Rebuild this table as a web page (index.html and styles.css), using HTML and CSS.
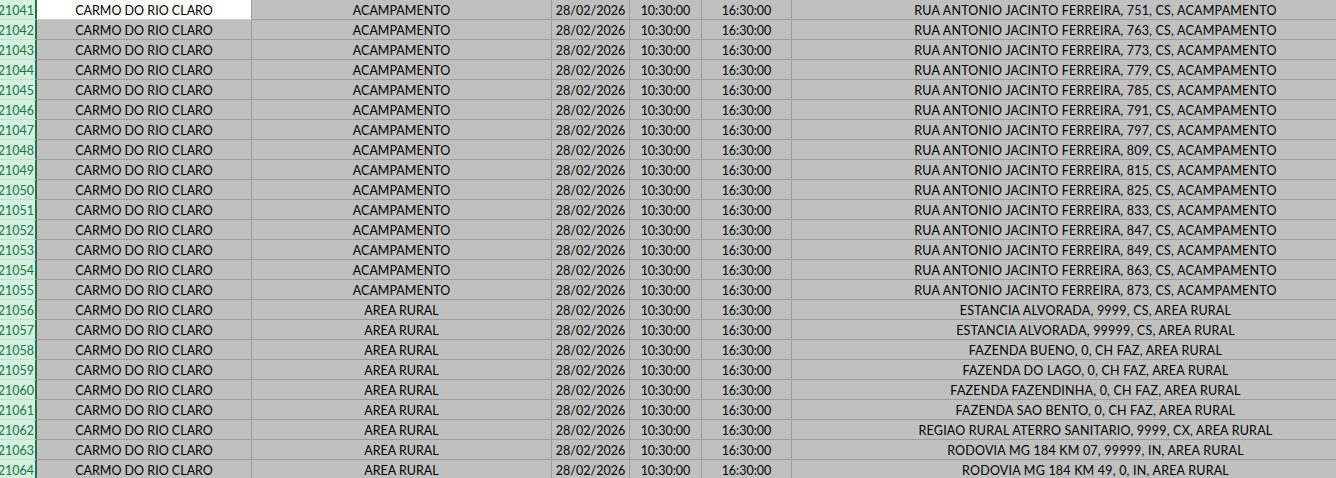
FILE: index.html
```html
<!DOCTYPE html>
<html lang="pt">
<head>
  <meta charset="UTF-8">
  <title>Planilha</title>
  <link rel="stylesheet" href="styles.css">
</head>
<body>
  <div class="sheet" id="sheet"></div>

  <script>
    const first = 21041;
    const rows = [
      ['ACAMPAMENTO', 'RUA ANTONIO JACINTO FERREIRA, 751, CS, ACAMPAMENTO'],
      ['ACAMPAMENTO', 'RUA ANTONIO JACINTO FERREIRA, 763, CS, ACAMPAMENTO'],
      ['ACAMPAMENTO', 'RUA ANTONIO JACINTO FERREIRA, 773, CS, ACAMPAMENTO'],
      ['ACAMPAMENTO', 'RUA ANTONIO JACINTO FERREIRA, 779, CS, ACAMPAMENTO'],
      ['ACAMPAMENTO', 'RUA ANTONIO JACINTO FERREIRA, 785, CS, ACAMPAMENTO'],
      ['ACAMPAMENTO', 'RUA ANTONIO JACINTO FERREIRA, 791, CS, ACAMPAMENTO'],
      ['ACAMPAMENTO', 'RUA ANTONIO JACINTO FERREIRA, 797, CS, ACAMPAMENTO'],
      ['ACAMPAMENTO', 'RUA ANTONIO JACINTO FERREIRA, 809, CS, ACAMPAMENTO'],
      ['ACAMPAMENTO', 'RUA ANTONIO JACINTO FERREIRA, 815, CS, ACAMPAMENTO'],
      ['ACAMPAMENTO', 'RUA ANTONIO JACINTO FERREIRA, 825, CS, ACAMPAMENTO'],
      ['ACAMPAMENTO', 'RUA ANTONIO JACINTO FERREIRA, 833, CS, ACAMPAMENTO'],
      ['ACAMPAMENTO', 'RUA ANTONIO JACINTO FERREIRA, 847, CS, ACAMPAMENTO'],
      ['ACAMPAMENTO', 'RUA ANTONIO JACINTO FERREIRA, 849, CS, ACAMPAMENTO'],
      ['ACAMPAMENTO', 'RUA ANTONIO JACINTO FERREIRA, 863, CS, ACAMPAMENTO'],
      ['ACAMPAMENTO', 'RUA ANTONIO JACINTO FERREIRA, 873, CS, ACAMPAMENTO'],
      ['AREA RURAL', 'ESTANCIA ALVORADA, 9999, CS, AREA RURAL'],
      ['AREA RURAL', 'ESTANCIA ALVORADA, 99999, CS, AREA RURAL'],
      ['AREA RURAL', 'FAZENDA BUENO, 0, CH FAZ, AREA RURAL'],
      ['AREA RURAL', 'FAZENDA DO LAGO, 0, CH FAZ, AREA RURAL'],
      ['AREA RURAL', 'FAZENDA FAZENDINHA, 0, CH FAZ, AREA RURAL'],
      ['AREA RURAL', 'FAZENDA SAO BENTO, 0, CH FAZ, AREA RURAL'],
      ['AREA RURAL', 'REGIAO RURAL ATERRO SANITARIO, 9999, CX, AREA RURAL'],
      ['AREA RURAL', 'RODOVIA MG 184 KM 07, 99999, IN, AREA RURAL'],
      ['AREA RURAL', 'RODOVIA MG 184 KM 49, 0, IN, AREA RURAL']
    ];

    const sheet = document.getElementById('sheet');

    rows.forEach((r, i) => {
      const row = document.createElement('div');
      row.className = 'row';

      const head = document.createElement('div');
      head.className = 'row-head';
      const num = document.createElement('span');
      num.textContent = first + i;
      head.appendChild(num);
      row.appendChild(head);

      // cidade, bairro, data, inicio, fim, endereco
      const cells = ['CARMO DO RIO CLARO', r[0], '28/02/2026', '10:30:00', '16:30:00', r[1]];
      const cols = ['col-a', 'col-b', 'col-c', 'col-d', 'col-e', 'col-f'];
      cells.forEach((text, c) => {
        const cell = document.createElement('div');
        cell.className = 'cell ' + cols[c];
        if (i === 0 && c === 0) cell.classList.add('active');
        cell.textContent = text;
        row.appendChild(cell);
      });

      sheet.appendChild(row);
    });
  </script>
</body>
</html>
```

FILE: styles.css
```css
body {
  margin: 0;
  background: #ffffff;
  font-family: Lato, 'Liberation Sans', sans-serif;
  font-size: 12.5px;
  color: #000;
  overflow: hidden;
}
.sheet {
  width: 1336px;
  overflow: hidden;
}
.row {
  display: flex;
  height: 20px;
}
.row-head {
  flex: 0 0 37px;
  box-sizing: border-box;
  display: flex;
  justify-content: flex-end;
  background: #d3f0e0;
  border-right: 2px solid #217346;
  border-bottom: 1px solid #bfe0cc;
  color: #217346;
  padding: 1px 1px 0 0;
  line-height: 20px;
  white-space: nowrap;
  overflow: hidden;
}
.row-head span {
  flex: 0 0 auto;
}
.cell {
  flex: 0 0 auto;
  box-sizing: border-box;
  height: 20px;
  padding-top: 1px;
  background: #c0c0c0;
  border-right: 1px solid #9e9e9e;
  border-bottom: 1px solid #9e9e9e;
  text-align: center;
  line-height: 20px;
  white-space: nowrap;
  overflow: hidden;
}
.cell.active {
  background: #ffffff;
  border-bottom-color: #c8c8c8;
}
.col-a { width: 215px; }
.col-b { width: 300px; }
.col-c { width: 78px; }
.col-d { width: 72px; }
.col-e { width: 90px; }
.col-f {
  width: 608px;
  letter-spacing: 0.2px;
}
```
